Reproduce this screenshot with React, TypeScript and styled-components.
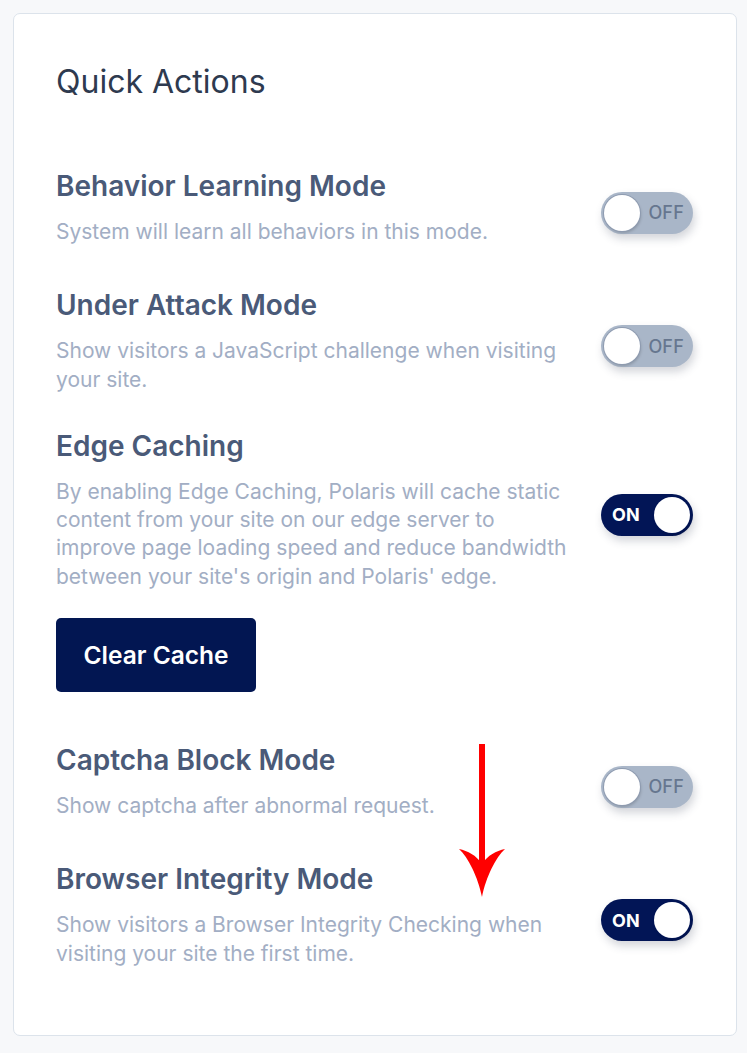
import React from 'react';
import styled, { createGlobalStyle } from 'styled-components';

const Global = createGlobalStyle`
  html, body { margin: 0; padding: 0; background: #f7f8fa; }
  body { font-family: Inter, "Noto Sans", sans-serif; -webkit-font-smoothing: antialiased; }
  * { box-sizing: border-box; }
`;

const Page = styled.div`
  padding: 13px 10px 17px 13px;
`;

const Card = styled.section`
  position: relative;
  width: 724px;
  height: 1023px;
  background: #ffffff;
  border: 1px solid #dce3eb;
  border-radius: 7px;
  padding: 49px 43px 0 42px;
`;

const Title = styled.h2`
  margin: 0 0 68px;
  font-size: 32px;
  line-height: 38px;
  font-weight: 400;
  color: #2e3a4f;
`;

const Row = styled.div<{ $gap?: number }>`
  display: flex;
  align-items: center;
  justify-content: space-between;
  margin-bottom: ${(p) => p.$gap ?? 42}px;
`;

const TextCol = styled.div`
  max-width: 522px;
`;

const Heading = styled.h3`
  margin: 0 0 15px;
  font-size: 28px;
  line-height: 34px;
  font-weight: 600;
  color: #4a5a78;
`;

const Desc = styled.p`
  margin: 0;
  font-size: 21px;
  line-height: 28.3px;
  font-weight: 400;
  color: #a2aec4;
`;

const Track = styled.button<{ $on: boolean }>`
  position: relative;
  flex: none;
  width: 92px;
  height: 42px;
  margin-top: 10px;
  border-radius: 21px;
  border: none;
  padding: 0;
  cursor: pointer;
  background: ${(p) => (p.$on ? '#021556' : '#a9b6c8')};
  box-shadow: 2px 5px 8px rgba(60, 70, 90, 0.22);
  font-family: Inter, "Noto Sans", sans-serif;
`;

const Knob = styled.span<{ $on: boolean }>`
  position: absolute;
  top: 3px;
  left: ${(p) => (p.$on ? '53px' : '3px')};
  width: 36px;
  height: 36px;
  border-radius: 50%;
  background: #ffffff;
  box-shadow: 0 0 0 1px ${(p) => (p.$on ? '#021556' : '#8e9bb0')}, 1px 2px 3px rgba(0, 0, 0, 0.18);
`;

const ToggleLabel = styled.span<{ $on: boolean }>`
  position: absolute;
  top: 0;
  bottom: 0;
  display: flex;
  align-items: center;
  ${(p) => (p.$on ? 'left: 11px;' : 'right: 9px;')}
  font-size: 18px;
  font-weight: ${(p) => (p.$on ? 700 : 500)};
  color: ${(p) => (p.$on ? '#ffffff' : '#66768f')};
  letter-spacing: 0.2px;
`;

const ClearButton = styled.button`
  display: block;
  width: 200px;
  height: 74px;
  margin: 0 0 51px;
  border: none;
  border-radius: 5px;
  background: #021652;
  color: #ffffff;
  font-family: Inter, "Noto Sans", sans-serif;
  font-size: 24.5px;
  font-weight: 600;
  cursor: pointer;
`;

const Arrow = styled.svg`
  position: absolute;
  left: 442px;
  top: 727px;
  width: 52px;
  height: 158px;
`;

function Toggle({ on }: { on: boolean }) {
  return (
    <Track $on={on} aria-pressed={on}>
      <ToggleLabel $on={on}>{on ? 'ON' : 'OFF'}</ToggleLabel>
      <Knob $on={on} />
    </Track>
  );
}

type Item = { title: string; desc: string; on: boolean; gap?: number };

const items: Item[] = [
  { title: 'Behavior Learning Mode', desc: 'System will learn all behaviors in this mode.', on: false },
  { title: 'Under Attack Mode', desc: 'Show visitors a JavaScript challenge when visiting your site.', on: false, gap: 35 },
  {
    title: 'Edge Caching',
    desc: "By enabling Edge Caching, Polaris will cache static content from your site on our edge server to improve page loading speed and reduce bandwidth between your site's origin and Polaris' edge.",
    on: true,
    gap: 27,
  },
];

const items2: Item[] = [
  { title: 'Captcha Block Mode', desc: 'Show captcha after abnormal request.', on: false },
  { title: 'Browser Integrity Mode', desc: 'Show visitors a Browser Integrity Checking when visiting your site the first time.', on: true },
];

function SettingRow({ item }: { item: Item }) {
  return (
    <Row $gap={item.gap}>
      <TextCol>
        <Heading>{item.title}</Heading>
        <Desc>{item.desc}</Desc>
      </TextCol>
      <Toggle on={item.on} />
    </Row>
  );
}

export default function App() {
  return (
    <>
      <Global />
      <Page>
        <Card>
          <Title>Quick Actions</Title>
          {items.map((it) => (
            <SettingRow key={it.title} item={it} />
          ))}
          <ClearButton>Clear Cache</ClearButton>
          {items2.map((it) => (
            <SettingRow key={it.title} item={it} />
          ))}
          <Arrow viewBox="0 0 52 158" aria-hidden="true">
            <rect x="23" y="3" width="6" height="120" fill="#ff0000" />
            <path d="M26 156 C22 136 12 116 3 108 C12 110 20 114 26 123 C32 114 40 110 49 108 C40 116 30 136 26 156 Z" fill="#ff0000" />
          </Arrow>
        </Card>
      </Page>
    </>
  );
}
